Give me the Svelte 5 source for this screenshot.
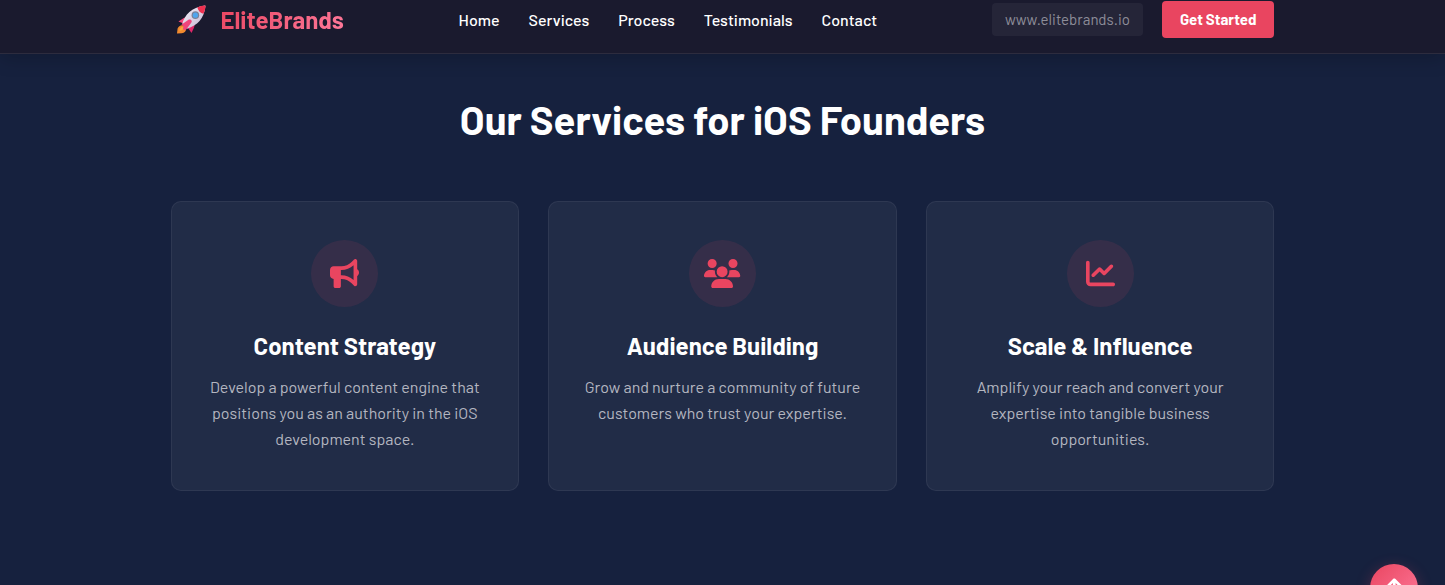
<script lang="ts">
	const links = ['Home', 'Services', 'Process', 'Testimonials', 'Contact'];

	const services = [
		{
			title: 'Content Strategy',
			text: 'Develop a powerful content engine that positions you as an authority in the iOS development space.',
			viewBox: '0 0 512 512',
			icon: 'M480 32c0-12.9-7.8-24.6-19.8-29.6s-25.7-2.2-34.9 6.9L381.7 53c-48 48-113.1 75-181 75H192 160 64c-35.3 0-64 28.7-64 64v96c0 35.3 28.7 64 64 64l0 128c0 17.7 14.3 32 32 32h64c17.7 0 32-14.3 32-32V352l8.7 0c67.9 0 133 27 181 75l43.6 43.6c9.2 9.2 22.9 11.9 34.9 6.9s19.8-16.6 19.8-29.6V300.4c18.6-8.8 32-32.5 32-60.4s-13.4-51.6-32-60.4V32zm-64 76.7V240 371.3C357.2 317.8 280.5 288 200.7 288H192V192h8.7c79.8 0 156.5-29.8 215.3-83.3z'
		},
		{
			title: 'Audience Building',
			text: 'Grow and nurture a community of future customers who trust your expertise.',
			viewBox: '0 0 640 512',
			icon: 'M144 0a80 80 0 1 1 0 160A80 80 0 1 1 144 0zM512 0a80 80 0 1 1 0 160A80 80 0 1 1 512 0zM0 298.7C0 239.8 47.8 192 106.7 192h42.7c15.9 0 31 3.5 44.6 9.7c-1.3 7.2-1.9 14.7-1.9 22.3c0 38.2 16.8 72.5 43.3 96c-.2 0-.4 0-.7 0H21.3C9.6 320 0 310.4 0 298.7zM405.3 320c-.2 0-.4 0-.7 0c26.6-23.5 43.3-57.8 43.3-96c0-7.6-.7-15-1.9-22.3c13.6-6.3 28.7-9.7 44.6-9.7h42.7C592.2 192 640 239.8 640 298.7c0 11.8-9.6 21.3-21.3 21.3H405.3zM224 224a96 96 0 1 1 192 0 96 96 0 1 1 -192 0zM128 485.3C128 411.7 187.7 352 261.3 352H378.7C452.3 352 512 411.7 512 485.3c0 14.7-11.9 26.7-26.7 26.7H154.7c-14.7 0-26.7-11.9-26.7-26.7z'
		},
		{
			title: 'Scale & Influence',
			text: 'Amplify your reach and convert your expertise into tangible business opportunities.',
			viewBox: '0 0 512 512',
			icon: 'M64 64c0-17.7-14.3-32-32-32S0 46.3 0 64V400c0 44.2 35.8 80 80 80H480c17.7 0 32-14.3 32-32s-14.3-32-32-32H80c-8.8 0-16-7.2-16-16V64zm406.6 86.6c12.5-12.5 12.5-32.8 0-45.3s-32.8-12.5-45.3 0L320 210.7l-57.4-57.4c-12.5-12.5-32.8-12.5-45.3 0l-112 112c-12.5 12.5-12.5 32.8 0 45.3s32.8 12.5 45.3 0L240 221.3l57.4 57.4c12.5 12.5 32.8 12.5 45.3 0l128-128z'
		}
	];
</script>

<header>
	<div class="container bar">
		<a class="logo" href="#home">
			<svg class="rocket" viewBox="0 0 32 32" aria-hidden="true">
				<defs>
					<linearGradient id="hull" x1="0" y1="0" x2="1" y2="1">
						<stop offset="0" stop-color="#f6f2fa" />
						<stop offset="1" stop-color="#c2b2cf" />
					</linearGradient>
				</defs>
				<path d="M7 22c-3 0-5.500 2-5.500 4.500L1 30.500l5-.4c3 0 4.500-2 4.500-5z" fill="#f28a2e" />
				<path d="M6.500 23.500c-2 .5-3 2-3 4 2.500 0 4-1 4.500-2.500z" fill="#f8a840" />
				<path d="M13 13 8 14.500 2.500 18l6 2.500z" fill="#f4487a" />
				<path d="m20 19-1.500 5.500L16 30l-4.500-6.500z" fill="#e0286a" />
				<path d="M6.500 20.500C9 11 16 3.500 29.500 1.500c.8 0 1 .4.900 1C29 15 22 22 11.500 25.500z" fill="url(#hull)" />
				<path d="M22 3.500c2.500-1.200 5-1.800 8-2 .5 0 .6.300.5.8-.3 3-1 5.500-2.200 7.700-3-.7-5.300-3-6.300-6.500z" fill="#ee3150" />
				<path d="M15.500 16.500c1 .6 1 1.600.2 2.800L10 27l-3-1 1-3-2.500-1.500 7-5c1.100-.7 2.100-.6 3 0z" fill="#f0457c" />
				<circle cx="20" cy="11.500" r="3.900" fill="#7a8098" />
				<circle cx="20" cy="11.500" r="2.700" fill="#50a5ee" />
			</svg>
			<span>EliteBrands</span>
		</a>
		<nav>
			{#each links as link}
				<a href="#{link.toLowerCase()}">{link}</a>
			{/each}
		</nav>
		<div class="actions">
			<span class="domain">www.elitebrands.io</span>
			<button class="cta">Get Started</button>
		</div>
	</div>
</header>

<main id="services">
	<div class="container">
		<h2>Our Services for iOS Founders</h2>
		<div class="cards">
			{#each services as service}
				<article>
					<div class="icon">
						<svg viewBox={service.viewBox} aria-hidden="true"><path d={service.icon} /></svg>
					</div>
					<h3>{service.title}</h3>
					<p>{service.text}</p>
				</article>
			{/each}
		</div>
	</div>
</main>

<button class="to-top" aria-label="Back to top">
	<svg viewBox="0 0 384 512" aria-hidden="true">
		<path d="M214.6 41.4c-12.5-12.5-32.8-12.5-45.3 0l-160 160c-12.5 12.5-12.5 32.8 0 45.3s32.8 12.5 45.3 0L160 141.2V448c0 17.7 14.3 32 32 32s32-14.3 32-32V141.2L329.4 246.6c12.5 12.5 32.8 12.5 45.3 0s12.5-32.8 0-45.3l-160-160z" />
	</svg>
</button>

<style>
	:global(body) {
		background: #16213e;
		color: #fff;
		font-family: Barlow, Roboto, 'Liberation Sans', sans-serif;
		font-size: 16px;
	}

	a {
		color: inherit;
		text-decoration: none;
	}

	button {
		border: 0;
		font: inherit;
		color: #fff;
		cursor: pointer;
	}

	.container {
		max-width: 1104px;
		margin: 0 auto;
		padding: 0 24px;
	}

	header {
		position: sticky;
		top: 0;
		z-index: 10;
		background: #1a1a2e;
		border-bottom: 1px solid #2d2c3e;
		box-shadow: 0 4px 20px rgba(0, 0, 0, 0.2);
	}

	.bar {
		display: flex;
		align-items: center;
		justify-content: space-between;
		padding-top: 1px;
		padding-bottom: 15px;
	}

	.logo {
		display: flex;
		align-items: center;
		gap: 14px;
		padding-left: 5px;
		font-size: 24px;
		line-height: 30px;
		font-weight: 700;
	}

	.logo span {
		background: linear-gradient(135deg, #e94560, #ff7b9c);
		background-clip: text;
		color: transparent;
	}

	.rocket {
		width: 31px;
		height: 31px;
	}

	nav {
		display: flex;
		gap: 29px;
		line-height: 20px;
		font-weight: 500;
	}

	.actions {
		display: flex;
		align-items: center;
		gap: 19px;
	}

	.domain {
		padding: 0 13px;
		border-radius: 4px;
		background: rgba(255, 255, 255, 0.05);
		color: #8d8d99;
		font-size: 15px;
		line-height: 33px;
	}

	.cta {
		padding: 0 18px;
		border-radius: 4px;
		background: #e94560;
		font-size: 15px;
		line-height: 37px;
		font-weight: 700;
	}

	main {
		padding: 36px 0 95px;
	}

	h2 {
		margin: 0 0 52px;
		font-size: 40px;
		line-height: 59px;
		font-weight: 700;
		text-align: center;
	}

	.cards {
		display: grid;
		grid-template-columns: repeat(auto-fit, minmax(280px, 1fr));
		gap: 29px;
	}

	article {
		padding: 38px 28px;
		border: 1px solid rgba(255, 255, 255, 0.06);
		border-radius: 10px;
		background: rgba(255, 255, 255, 0.05);
		text-align: center;
	}

	.icon {
		display: flex;
		align-items: center;
		justify-content: center;
		width: 67px;
		height: 67px;
		margin: 0 auto 20px;
		border-radius: 50%;
		background: rgba(233, 69, 96, 0.1);
	}

	.icon svg {
		height: 29px;
		fill: #e94560;
	}

	h3 {
		margin: 0 0 10px;
		font-size: 24px;
		line-height: 37px;
		font-weight: 700;
	}

	p {
		margin: 0;
		color: #b4b6c0;
		line-height: 26px;
	}

	.to-top {
		position: fixed;
		right: 27px;
		bottom: -27px;
		display: flex;
		align-items: center;
		justify-content: center;
		width: 48px;
		height: 48px;
		padding: 0;
		border-radius: 50%;
		background: linear-gradient(135deg, #e94560, #ff7b9c);
		box-shadow: 0 4px 15px rgba(233, 69, 96, 0.3);
	}

	.to-top svg {
		height: 22px;
		fill: #fff;
	}
</style>
